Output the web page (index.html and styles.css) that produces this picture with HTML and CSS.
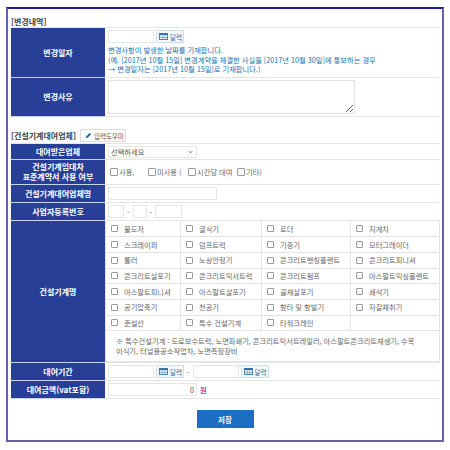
FILE: index.html
```html
<!DOCTYPE html>
<html lang="ko">
<head>
    <meta charset="UTF-8">
    <title>변경내역</title>
    <link rel="stylesheet" href="styles.css">
</head>
<body>

<div class="frame">
    <!-- 변경내역 -->
    <h2 class="section-title">[변경내역]</h2>
    <table class="form-table">
        <tr class="row-date">
            <th>변경일자</th>
            <td>
                <div class="field-line">
                    <input type="text" class="input-date">
                    <button class="btn-cal">
                        <svg class="cal-icon" viewBox="0 0 10 8"><rect x="0.5" y="0.5" width="9" height="7" fill="#fff" stroke="#2f6f9f"/><rect x="0.5" y="0.5" width="9" height="2" fill="#2f6f9f"/><path d="M3.5 3v4M6.5 3v4M1 5h8" stroke="#2f6f9f" stroke-width="0.6"/></svg>
                        달력
                    </button>
                </div>
                <p class="note">변경사항이 발생한 날짜를 기재합니다.<br>(예. [2017년 10월 15일] 변경계약을 체결한 사실을 [2017년 10월 30일]에 통보하는 경우<br>→ 변경일자는 [2017년 10월 15일]로 기재합니다.)</p>
            </td>
        </tr>
        <tr class="row-reason">
            <th>변경사유</th>
            <td><textarea class="input-reason"></textarea></td>
        </tr>
    </table>

    <!-- 건설기계대여업체 -->
    <div class="title-line">
        <h2 class="section-title">[건설기계대여업체]</h2>
        <button class="btn-help">
            <svg class="pen-icon" viewBox="0 0 8 8"><path d="M1 7l0.6-2.2L5.4 1l1.6 1.6-3.8 3.8z" fill="#1f5f96"/></svg>
            입력도우미
        </button>
    </div>
    <table class="form-table">
        <tr class="row-s1">
            <th>대여받은업체</th>
            <td>
                <select class="input-select"><option>선택하세요</option></select>
            </td>
        </tr>
        <tr class="row-s2">
            <th>건설기계임대차<br>표준계약서 사용 여부</th>
            <td class="check-line">
                <label class="check-use"><input type="checkbox">사용,</label>
                <label class="check-no"><input type="checkbox">미사용 (</label>
                <label class="check-time"><input type="checkbox">시간당 대여</label>
                <label><input type="checkbox">기타)</label>
            </td>
        </tr>
        <tr class="row-s3">
            <th>건설기계대여업체명</th>
            <td><input type="text" class="input-name"></td>
        </tr>
        <tr class="row-s3">
            <th>사업자등록번호</th>
            <td>
                <div class="field-line">
                    <input type="text" class="input-biz1"><span>-</span>
                    <input type="text" class="input-biz2"><span>-</span>
                    <input type="text" class="input-biz3">
                </div>
            </td>
        </tr>
        <tr>
            <th>건설기계명</th>
            <td class="machine-cell">
                <table class="machine-table">
                    <tr>
                        <td><label><input type="checkbox">불도저</label></td>
                        <td><label><input type="checkbox">굴삭기</label></td>
                        <td><label><input type="checkbox">로더</label></td>
                        <td><label><input type="checkbox">지게차</label></td>
                    </tr>
                    <tr>
                        <td><label><input type="checkbox">스크레이퍼</label></td>
                        <td><label><input type="checkbox">덤프트럭</label></td>
                        <td><label><input type="checkbox">기중기</label></td>
                        <td><label><input type="checkbox">모터그레이더</label></td>
                    </tr>
                    <tr>
                        <td><label><input type="checkbox">롤러</label></td>
                        <td><label><input type="checkbox">노상안정기</label></td>
                        <td><label><input type="checkbox">콘크리트뱃칭플랜트</label></td>
                        <td><label><input type="checkbox">콘크리트피니셔</label></td>
                    </tr>
                    <tr>
                        <td><label><input type="checkbox">콘크리트살포기</label></td>
                        <td><label><input type="checkbox">콘크리트믹서트럭</label></td>
                        <td><label><input type="checkbox">콘크리트펌프</label></td>
                        <td><label><input type="checkbox">아스팔트믹싱플랜트</label></td>
                    </tr>
                    <tr>
                        <td><label><input type="checkbox">아스팔트피니셔</label></td>
                        <td><label><input type="checkbox">아스팔트살포기</label></td>
                        <td><label><input type="checkbox">골재살포기</label></td>
                        <td><label><input type="checkbox">쇄석기</label></td>
                    </tr>
                    <tr>
                        <td><label><input type="checkbox">공기압축기</label></td>
                        <td><label><input type="checkbox">천공기</label></td>
                        <td><label><input type="checkbox">항타 및 항발기</label></td>
                        <td><label><input type="checkbox">자갈채취기</label></td>
                    </tr>
                    <tr>
                        <td><label><input type="checkbox">준설선</label></td>
                        <td><label><input type="checkbox">특수 건설기계</label></td>
                        <td><label><input type="checkbox">타워크레인</label></td>
                        <td></td>
                    </tr>
                </table>
                <p class="machine-note">※ 특수건설기계 : 도로보수트럭, 노면파쇄기, 콘크리트믹서트레일러, 아스팔트콘크리트재생기, 수목<br>이식기, 터널용공소작업차, 노면측정장비</p>
            </td>
        </tr>
        <tr class="row-s3">
            <th>대여기간</th>
            <td>
                <div class="field-line">
                    <input type="text" class="input-date">
                    <button class="btn-cal">
                        <svg class="cal-icon" viewBox="0 0 10 8"><rect x="0.5" y="0.5" width="9" height="7" fill="#fff" stroke="#2f6f9f"/><rect x="0.5" y="0.5" width="9" height="2" fill="#2f6f9f"/><path d="M3.5 3v4M6.5 3v4M1 5h8" stroke="#2f6f9f" stroke-width="0.6"/></svg>
                        달력
                    </button>
                    <span>-</span>
                    <input type="text" class="input-date">
                    <button class="btn-cal">
                        <svg class="cal-icon" viewBox="0 0 10 8"><rect x="0.5" y="0.5" width="9" height="7" fill="#fff" stroke="#2f6f9f"/><rect x="0.5" y="0.5" width="9" height="2" fill="#2f6f9f"/><path d="M3.5 3v4M6.5 3v4M1 5h8" stroke="#2f6f9f" stroke-width="0.6"/></svg>
                        달력
                    </button>
                </div>
            </td>
        </tr>
        <tr class="row-s3">
            <th>대여금액(vat포함)</th>
            <td>
                <div class="field-line">
                    <input type="text" class="input-amount" value="0">
                    <span class="won">원</span>
                </div>
            </td>
        </tr>
    </table>

    <div class="button-line">
        <button class="btn-save">저장</button>
    </div>
</div>

</body>
</html>
```

FILE: styles.css
```css
* {
    box-sizing: border-box;
}
body {
    margin: 0;
    padding: 7px 6px 0;
    background-color: #FFF;
    font-family: "Noto Sans CJK KR", "Noto Sans", sans-serif;
    font-size: 7.25px;
    color: #666;
}
.frame {
    width: 438px;
    height: 435px;
    padding: 8px 3px 0 3px;
    border: 2px solid #6A62A8;
    border-top-color: #1C1C9C;
}
.section-title {
    margin: 0;
    font-size: 8px;
    line-height: 9px;
    font-weight: bold;
    color: #444;
    white-space: nowrap;
}
.form-table {
    width: 429px;
    margin-top: 1px;
    border-collapse: collapse;
    table-layout: fixed;
    border-top: 1px solid #E4E4E4;
}
.form-table > tbody > tr > th {
    width: 94px;
    padding: 0;
    background-color: #273F96;
    border-bottom: 1px solid #C9D2EA;
    color: #FFF;
    font-size: 8px;
    line-height: 10px;
    font-weight: bold;
    text-align: center;
}
.form-table > tbody > tr > td {
    padding: 1px 3px;
    border-bottom: 1px solid #E4E4E4;
    vertical-align: middle;
}
.row-date {
    height: 50px;
}
.row-date td {
    vertical-align: top;
}
.row-reason {
    height: 39px;
}
.row-s1 {
    height: 16px;
}
.row-s2 {
    height: 25px;
}
.row-s3 {
    height: 18px;
}
.field-line {
    display: flex;
    align-items: center;
    gap: 2px;
}
.field-line span {
    padding: 0 1px;
}
input[type="text"], textarea, select {
    display: block;
    margin: 0;
    padding: 0 2px;
    border: 1px solid #E6E6E6;
    border-radius: 0;
    background-color: #FFF;
    font-family: inherit;
    font-size: 7.25px;
    color: #555;
}
input[type="text"] {
    height: 13px;
}
.input-date {
    width: 46px;
}
.input-name {
    width: 109px;
}
.input-biz1 {
    width: 16px;
}
.input-biz2 {
    width: 14px;
}
.input-biz3 {
    width: 27px;
}
.input-amount {
    width: 89px;
    text-align: right;
}
.input-select {
    appearance: none;
    width: 89px;
    height: 12px;
    background: #FFF url("data:image/svg+xml,%3Csvg xmlns='http://www.w3.org/2000/svg' viewBox='0 0 6 4'%3E%3Cpath d='M1 1l2 2 2-2' fill='none' stroke='%23444' stroke-width='1'/%3E%3C/svg%3E") no-repeat right 3px center / 5px 4px;
}
.input-reason {
    width: 247px;
    height: 34px;
    border-color: #E2E2E2;
}
.btn-cal {
    display: flex;
    align-items: center;
    gap: 2px;
    width: 28px;
    height: 13px;
    padding: 0 2px;
    border: 1px solid #CFDDE8;
    background-color: #F4F8FB;
    color: #2F6F9F;
    font-family: inherit;
    font-size: 6.5px;
    white-space: nowrap;
}
.cal-icon {
    width: 9px;
    height: 7px;
    flex-shrink: 0;
}
.note {
    margin: 3px 0 0;
    line-height: 9.5px;
    color: #1A6FB0;
}
.title-line {
    display: flex;
    align-items: center;
    gap: 4px;
    margin-top: 12px;
    height: 13px;
}
.btn-help {
    display: flex;
    align-items: center;
    gap: 2px;
    width: 46px;
    height: 13px;
    padding: 0 3px 0 4px;
    border: 1px solid #DDD;
    background-color: #FFF;
    color: #555;
    font-family: inherit;
    font-size: 6.5px;
    white-space: nowrap;
}
.pen-icon {
    width: 7px;
    height: 7px;
    flex-shrink: 0;
}
.check-line label {
    display: inline-flex;
    align-items: center;
}
.check-line input[type="checkbox"] {
    width: 8px;
    height: 8px;
}
.check-line .check-use {
    width: 36px;
    margin-left: 2px;
}
.check-line .check-no {
    width: 38px;
}
.check-line .check-time {
    width: 47px;
}
input[type="checkbox"] {
    appearance: none;
    width: 7px;
    height: 7px;
    margin: 0 1px 0 0;
    border: 1px solid #999;
    border-radius: 1px;
    background-color: #FFF;
    flex-shrink: 0;
}
.form-table > tbody > tr > .machine-cell {
    padding: 0;
}
.machine-table {
    width: 100%;
    border-collapse: collapse;
    table-layout: fixed;
}
.machine-table td {
    height: 15.7px;
    padding: 0 0 0 5px;
    border: 1px solid #E4E4E4;
    border-top: 0;
}
.machine-table td:nth-child(1) {
    width: 75px;
}
.machine-table td:nth-child(2) {
    width: 81px;
}
.machine-table td:nth-child(3) {
    width: 89px;
}
.machine-table label {
    display: flex;
    align-items: center;
    white-space: nowrap;
}
.machine-table input[type="checkbox"] {
    margin-right: 6px;
}
.machine-note {
    margin: 0;
    padding: 5px 4px 0 10px;
    height: 31px;
    line-height: 10px;
    background-color: #FFF;
    border: 1px solid #E4E4E4;
    border-top: 0;
    white-space: nowrap;
}
.won {
    color: #C0409A;
    font-weight: bold;
}
.button-line {
    display: flex;
    justify-content: center;
    margin-top: 11px;
}
.btn-save {
    width: 57px;
    height: 18px;
    border: none;
    background-color: #1B6EC2;
    color: #FFF;
    font-family: inherit;
    font-size: 7.5px;
    font-weight: bold;
}
```
